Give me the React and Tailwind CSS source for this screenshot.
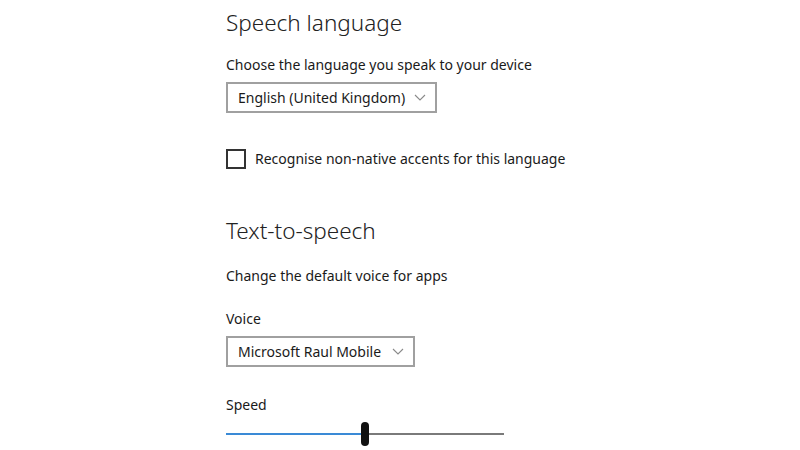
import React from 'react';

function Chevron() {
  return (
    <svg width="12" height="7" viewBox="0 0 12 7" fill="none" className="ml-auto shrink-0">
      <path d="M1 1l5 5 5-5" stroke="#8a8a8a" strokeWidth="1.1" />
    </svg>
  );
}

function Dropdown({ value, width }) {
  return (
    <div
      className={`flex items-center h-[31px] border-2 border-[#a0a0a0] bg-white pl-[10px] pr-[9px] text-[14px] text-[#1a1a1a] whitespace-nowrap ${width}`}
    >
      <span>{value}</span>
      <Chevron />
    </div>
  );
}

export default function App() {
  return (
    <div
      className="w-[800px] h-[450px] bg-white overflow-hidden text-[#1a1a1a]"
      style={{ fontFamily: '"Noto Sans", "Open Sans", sans-serif' }}
    >
      <div className="ml-[226px] flex flex-col">
        {/* Speech language */}
        <h2 className="mt-[7px] text-[22.5px] leading-[32px] font-light text-[#222]">Speech language</h2>
        <p className="mt-[16px] text-[14px] leading-[20px]">Choose the language you speak to your device</p>
        <div className="mt-[7px]">
          <Dropdown value="English (United Kingdom)" width="w-[211px]" />
        </div>
        <label className="mt-[36px] flex items-center gap-[9px] text-[14px] leading-[20px]">
          <span className="w-[20px] h-[20px] border-2 border-[#333]" />
          <span>Recognise non-native accents for this language</span>
        </label>

        {/* Text-to-speech */}
        <h2 className="mt-[46px] text-[22.5px] leading-[32px] font-light text-[#222]">Text-to-speech</h2>
        <p className="mt-[19px] text-[14px] leading-[20px]">Change the default voice for apps</p>
        <p className="mt-[23px] text-[14px] leading-[20px]">Voice</p>
        <div className="mt-[7px]">
          <Dropdown value="Microsoft Raul Mobile" width="w-[189px]" />
        </div>
        <p className="mt-[28px] text-[14px] leading-[20px]">Speed</p>
        {/* slider */}
        <div className="relative mt-[7px] w-[278px] h-[24px] flex items-center">
          <div className="h-[2px] w-[136px] bg-[#3a8ad6]" />
          <div className="h-[2px] flex-1 bg-[#7a7a7a]" />
          <div className="absolute left-[135px] top-0 w-[8px] h-[24px] rounded-full bg-[#111]" />
        </div>
      </div>
    </div>
  );
}
